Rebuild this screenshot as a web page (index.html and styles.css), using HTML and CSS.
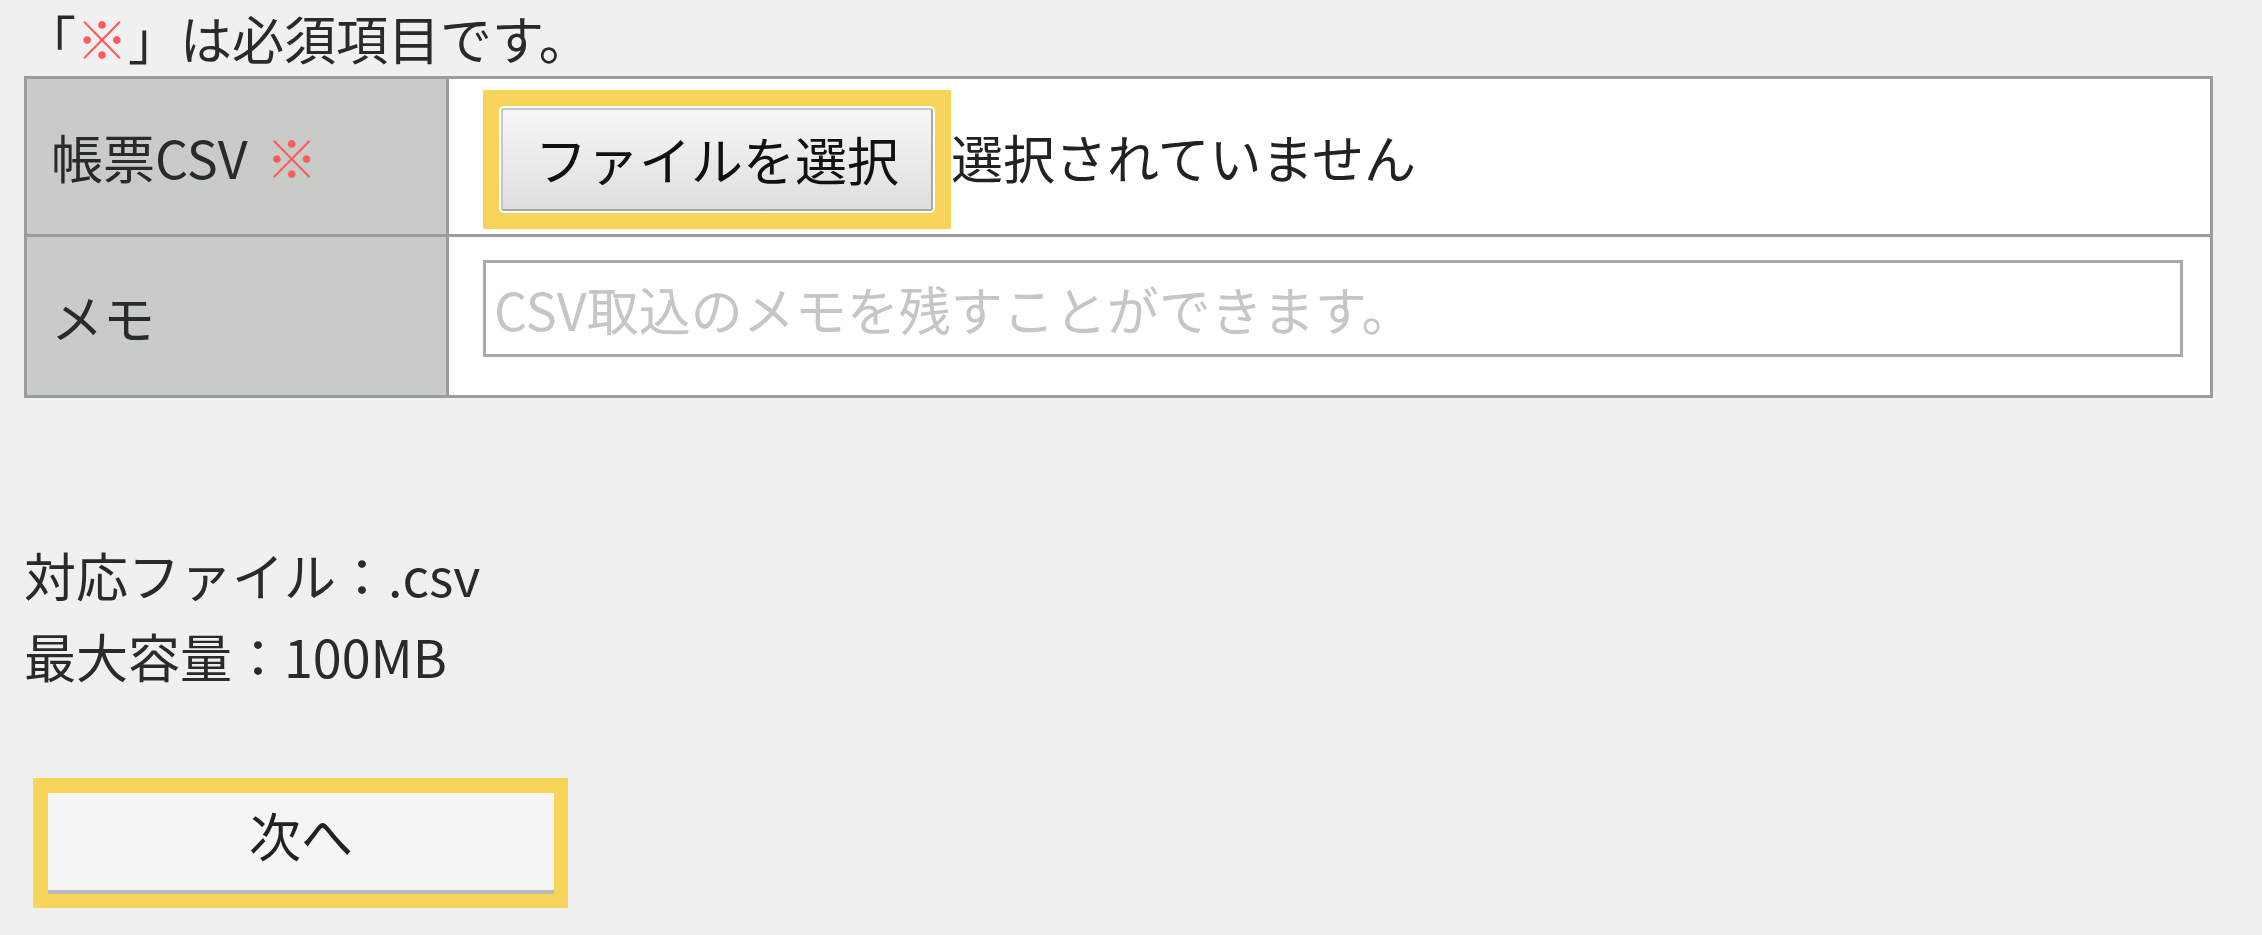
FILE: index.html
```html
<!DOCTYPE html>
<html lang="ja">
<head>
<meta charset="utf-8">
<title>帳票CSV取込</title>
<link rel="stylesheet" href="styles.css">
</head>
<body>
<div class="page">
  <p class="note">「<span class="req">※</span>」は必須項目です。</p>
  <div class="form">
    <div class="label row1">帳票CSV<span class="req req-label">※</span></div>
    <div class="value row1">
      <span class="hl hl-file"><button class="file-btn" type="button">ファイルを選択</button></span>
      <span class="file-status">選択されていません</span>
    </div>
    <div class="label">メモ</div>
    <div class="value memo">
      <input class="memo-input" type="text" placeholder="CSV取込のメモを残すことができます。">
    </div>
  </div>
  <div class="info">
    <div>対応ファイル：.csv</div>
    <div>最大容量：100MB</div>
  </div>
  <span class="hl hl-next"><button class="next-btn" type="button">次へ</button></span>
</div>
</body>
</html>
```

FILE: styles.css
```css
html, body {
  margin: 0;
  padding: 0;
  background: #eff0ef;
}
body {
  font-family: "Noto Sans CJK JP", "Noto Sans", sans-serif;
  font-size: 52px;
  color: #222;
}
.page {
  padding-left: 24px;
  width: 2189px;
}
.note {
  margin: 0;
  line-height: 76px;
  color: #2a2a2a;
}
.req {
  color: #ff5d5d;
}
.req-label {
  margin-left: 18px;
}
.form {
  display: grid;
  grid-template-columns: 422px 1fr;
  border: 3px solid #9c9c9c;
  background: #fff;
}
.label {
  background: #c8ccc8;
  border-right: 3px solid #9c9c9c;
  padding-left: 24px;
  display: flex;
  align-items: center;
  height: 158px;
  box-sizing: border-box;
  color: #2a2a2a;
}
.value {
  display: flex;
  align-items: center;
  padding-left: 34px;
  padding-right: 27px;
  height: 158px;
  box-sizing: border-box;
}
.row1 {
  height: 158px;
  border-bottom: 3px solid #9c9c9c;
}
.memo {
  padding-bottom: 16px;
}
.hl {
  display: inline-flex;
  background: #f7d45a;
  padding: 18px;
}
.hl-file {
  margin-top: 5px;
}
.file-btn {
  width: 432px;
  height: 103px;
  font-family: inherit;
  font-size: 52px;
  color: #111;
  background: linear-gradient(#f7f7f7, #dedede);
  border: 2px solid #a8a8a8;
  border-top-color: #c8c8c8;
  border-left-color: #c8c8c8;
  border-radius: 3px;
  box-shadow: 0 0 0 2px #fff;
  padding: 0;
  line-height: 1;
}
.file-status {
  color: #222;
}
.memo-input {
  width: 100%;
  height: 97px;
  box-sizing: border-box;
  border: 3px solid #a9a9a9;
  background: #fff;
  font-family: inherit;
  font-size: 52px;
  padding: 0 8px;
  color: #222;
}
.memo-input::placeholder {
  color: #c6c6c6;
}
.info {
  margin-top: 136px;
  line-height: 81px;
  color: #2a2a2a;
}
.hl-next {
  margin-top: 82px;
  margin-left: 9px;
  padding: 15px 14px 14px 15px;
}
.next-btn {
  width: 506px;
  height: 101px;
  font-family: inherit;
  font-size: 52px;
  color: #222;
  background: #f4f5f4;
  border: none;
  border-bottom: 4px solid #b7bbbb;
  padding: 0 0 14px 0;
  line-height: 1;
}
```
